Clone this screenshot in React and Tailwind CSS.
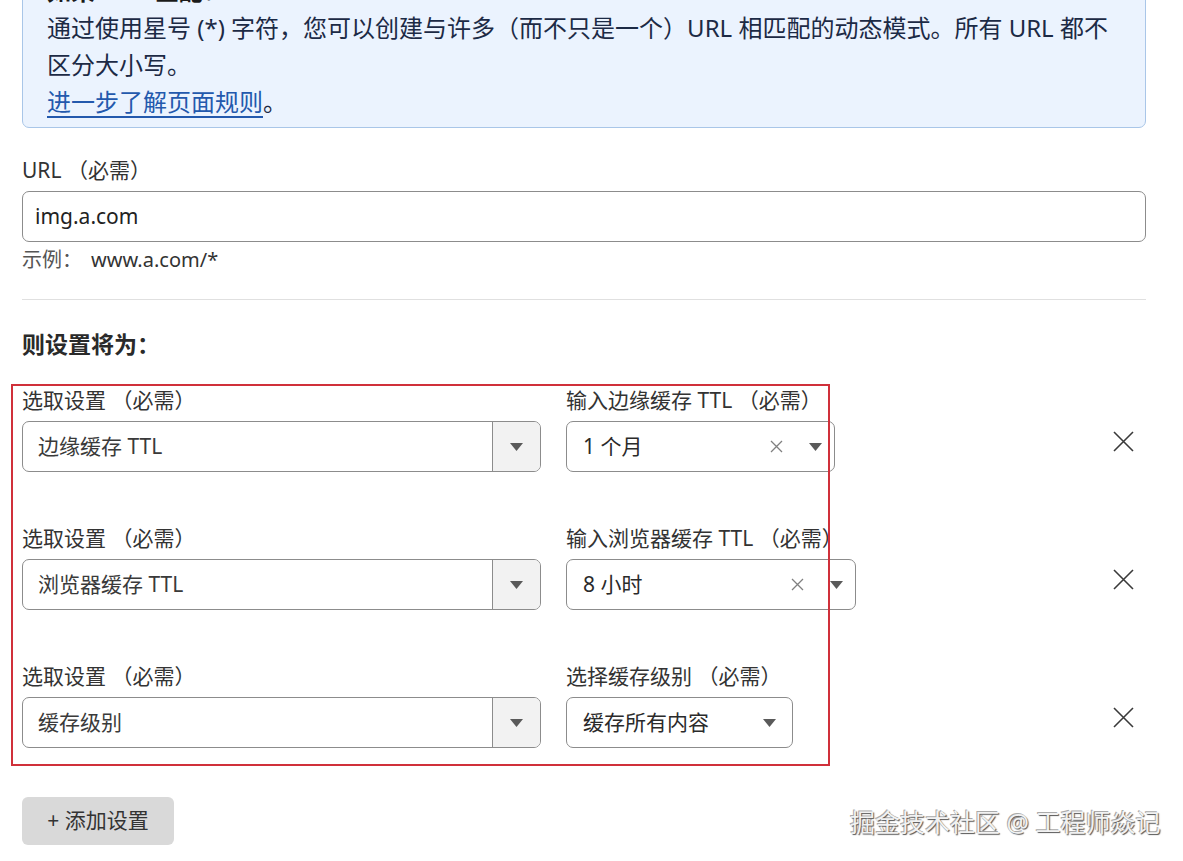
import React from "react";

const font = { fontFamily: '"Noto Sans", "Noto Sans CJK SC", sans-serif' };

function Caret() {
  return (
    <svg width="13" height="8" viewBox="0 0 13 8" className="shrink-0">
      <polygon points="0,0 13,0 6.5,8" fill="#5a5a5a" />
    </svg>
  );
}

function SmallX() {
  return (
    <svg width="13" height="13" viewBox="0 0 13 13" className="shrink-0">
      <path d="M1 1 L12 12 M12 1 L1 12" stroke="#808080" strokeWidth="1.3" fill="none" />
    </svg>
  );
}

function BigX() {
  return (
    <svg width="21" height="21" viewBox="0 0 21 21">
      <path d="M1 1 L20 20 M20 1 L1 20" stroke="#3a3a3a" strokeWidth="1.6" fill="none" />
    </svg>
  );
}

function SettingSelect({ value }) {
  return (
    <div className="flex h-[51px] w-[519px] rounded-[7px] border border-[#8c8c8c] overflow-hidden">
      <div className="flex flex-1 items-center pl-[15px] text-[21px] text-[#3a3a3a]">{value}</div>
      <div className="flex w-[48px] items-center justify-center border-l border-[#8c8c8c] bg-[#f2f2f2]">
        <Caret />
      </div>
    </div>
  );
}

function ValueSelect({ value, width, clear, pr }) {
  return (
    <div
      className={`flex h-[51px] items-center rounded-[7px] border border-[#8c8c8c] pl-[16px] ${width} ${pr}`}
    >
      <div className="flex-1 text-[21px] text-[#2a2a2a]">{value}</div>
      {clear && (
        <div className="mr-[26px]">
          <SmallX />
        </div>
      )}
      <Caret />
    </div>
  );
}

function Row({ value, label2, value2, width2, pr2, clear, first }) {
  return (
    <div className={`flex items-end ${first ? "mt-[26px]" : "mt-[51px]"}`}>
      <div className="flex flex-col">
        <div className="h-[30px] leading-[30px] text-[21px] text-[#333]">选取设置 （必需）</div>
        <div className="mt-[6px]">
          <SettingSelect value={value} />
        </div>
      </div>
      <div className="ml-[25px] flex flex-col">
        <div className="h-[30px] leading-[30px] text-[21px] text-[#333] whitespace-nowrap">{label2}</div>
        <div className="mt-[6px]">
          <ValueSelect value={value2} width={width2} clear={clear} pr={pr2} />
        </div>
      </div>
      <div className="ml-auto mr-[12px] flex h-[51px] items-center pb-[10px]">
        <BigX />
      </div>
    </div>
  );
}

export default function App() {
  return (
    <div className="relative h-[861px] w-[1183px] overflow-hidden bg-white" style={font}>
      <div className="pl-[22px] pr-[37px]">
        {/* info box */}
        <div className="mt-[-41px] rounded-[7px] border border-[#a9c6e8] bg-[#ebf3fe] pl-[24px] pt-[12px] pb-[7px] text-[24px] leading-[37px] text-[#1c2a45]">
          <div className="font-bold text-[#1a1a1a]">如果 URL 匹配：</div>
          <div className="whitespace-nowrap">
            通过使用星号 (*) 字符，您可以创建与许多（而不只是一个）URL 相匹配的动态模式。所有 URL 都不
          </div>
          <div>区分大小写。</div>
          <div>
            <span className="text-[#2359ad] underline decoration-[2px] underline-offset-[5px]">进一步了解页面规则</span>
            。
          </div>
        </div>

        {/* URL field */}
        <div className="mt-[27px] h-[30px] leading-[30px] text-[21px] text-[#333]">URL （必需）</div>
        <div className="mt-[6px] flex h-[51px] items-center rounded-[7px] border border-[#8c8c8c] pl-[12px] text-[21px] text-[#222]">
          img.a.com
        </div>
        <div className="mt-[3px] h-[30px] leading-[30px] text-[20px]">
          <span className="text-[#555]">示例：</span>
          <span className="ml-[9px] text-[#333]">www.a.com/*</span>
        </div>

        <div className="mt-[24px] h-px bg-[#e0e0e0]" />

        <div className="mt-[29px] h-[30px] leading-[30px] text-[23px] font-bold text-[#2a2a2a]">则设置将为：</div>

        <Row
          first
          value="边缘缓存 TTL"
          label2="输入边缘缓存 TTL （必需）"
          value2="1 个月"
          width2="w-[269px]"
          pr2="pr-[12px]"
          clear
        />
        <Row
          value="浏览器缓存 TTL"
          label2="输入浏览器缓存 TTL （必需）"
          value2="8 小时"
          width2="w-[290px]"
          pr2="pr-[12px]"
          clear
        />
        <Row
          value="缓存级别"
          label2="选择缓存级别 （必需）"
          value2="缓存所有内容"
          width2="w-[227px]"
          pr2="pr-[16px]"
        />

        <button className="mt-[49px] flex h-[48px] w-[152px] items-center justify-center rounded-[6px] bg-[#d9d9d9] text-[21px] text-[#333]">
          + 添加设置
        </button>
      </div>

      {/* annotation rectangle */}
      <div className="pointer-events-none absolute left-[11px] top-[384px] h-[382px] w-[819px] border-2 border-[#d0303a]" />

      {/* watermark */}
      <div className="absolute left-[850px] top-[806px] text-[25px] leading-[32px] text-[#f2f2f2] [text-shadow:1px_1px_1px_#555,-1px_-1px_0_#aaa]">
        掘金技术社区 @ 工程师焱记
      </div>
    </div>
  );
}
